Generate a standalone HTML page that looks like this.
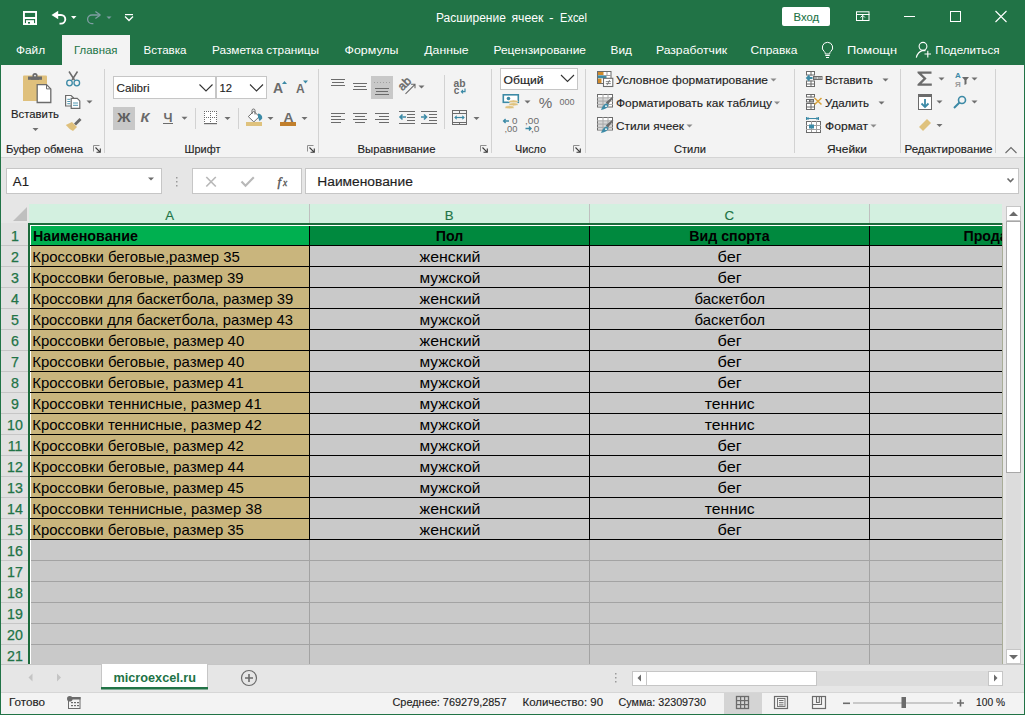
<!DOCTYPE html>
<html><head><meta charset="utf-8"><title>Excel</title>
<style>html,body{margin:0;padding:0;width:1025px;height:715px;overflow:hidden;background:#f3f3f3}svg{display:block}text{white-space:pre}</style>
</head><body><svg width="1025" height="715" viewBox="0 0 1025 715"><rect x="0" y="0" width="1025" height="65" fill="#217346" />
<rect x="62" y="35" width="68" height="30" fill="#f3f3f3" />
<rect x="1" y="65" width="1023" height="92" fill="#f3f3f3" />
<rect x="1" y="157" width="1023" height="47" fill="#e6e6e6" />
<rect x="1" y="157" width="1023" height="1" fill="#d4d4d4" />
<text x="436.0" y="22" font-size="12.3" fill="#ffffff" textLength="69.8" lengthAdjust="spacingAndGlyphs" font-family="Liberation Sans" >Расширение</text>
<text x="511.4" y="22" font-size="12.3" fill="#ffffff" textLength="32.0" lengthAdjust="spacingAndGlyphs" font-family="Liberation Sans" >ячеек</text>
<text x="549.0" y="22" font-size="12.3" fill="#ffffff" textLength="4.6" lengthAdjust="spacingAndGlyphs" font-family="Liberation Sans" >-</text>
<text x="560.1" y="22" font-size="12.3" fill="#ffffff" textLength="26.8" lengthAdjust="spacingAndGlyphs" font-family="Liberation Sans" >Excel</text>
<rect x="782" y="7" width="48" height="19" fill="#ffffff" rx="2"/>
<text x="793.5" y="21" font-size="11.5" fill="#217346" stroke="#217346" stroke-width="0.1" textLength="25.5" lengthAdjust="spacingAndGlyphs" font-family="Liberation Sans" >Вход</text>
<rect x="23" y="11" width="14" height="1.9" fill="#ffffff" />
<rect x="23" y="11" width="1.9" height="14" fill="#ffffff" />
<rect x="35.1" y="11" width="1.9" height="14" fill="#ffffff" />
<rect x="23" y="23.1" width="14" height="1.9" fill="#ffffff" />
<rect x="23" y="17" width="14" height="2" fill="#ffffff" />
<rect x="26" y="20.2" width="8" height="4" fill="#ffffff" />
<rect x="28" y="22" width="2" height="1.6" fill="#217346" />
<path d="M51.5 15 L58.2 10.8 L58.2 19.2 Z" fill="#ffffff" />
<path d="M57 15 H61 A4.3 4.3 0 0 1 61 23.6 H59.5" fill="none" stroke="#ffffff" stroke-width="1.9" />
<path d="M71 16 h5.5 l-2.75 3 z" fill="#ffffff" />
<g transform="matrix(-1 0 0 1 152.9 0)">
<path d="M52.5 15 L57.5 11.5 M52.5 15 L57.5 18.5" fill="none" stroke="#7f9ea3" stroke-width="1.3" />
<path d="M53 15 H61 A4.3 4.3 0 0 1 61 23.6 H59.5" fill="none" stroke="#7f9ea3" stroke-width="1.3" />
</g>
<path d="M106.5 16.5 h5 l-2.5 2.5 z" fill="#7f9ea3" />
<rect x="125" y="14" width="8" height="1.2" fill="#ffffff" />
<path d="M125 16.5 l4 4 l4 -4" fill="none" stroke="#ffffff" stroke-width="1.3" />
<rect x="856.5" y="11.8" width="12.5" height="8.7" fill="none" stroke="#ffffff" stroke-width="1"/>
<rect x="856" y="14" width="13.5" height="1" fill="#ffffff" />
<path d="M862.7 20.5 v-5.2 M860.5 17.5 l2.2 -2.2 l2.2 2.2" fill="none" stroke="#ffffff" stroke-width="1" />
<rect x="904" y="16" width="11" height="1" fill="#ffffff" />
<rect x="950.5" y="11.5" width="10" height="10" fill="none" stroke="#ffffff" stroke-width="1"/>
<path d="M995.5 11 L1006.5 22 M1006.5 11 L995.5 22" fill="none" stroke="#ffffff" stroke-width="1.1" />
<text x="15.899999999999999" y="53.5" font-size="11.5" fill="#ffffff" textLength="29.2" lengthAdjust="spacingAndGlyphs" font-family="Liberation Sans" >Файл</text>
<text x="74.0" y="53.5" font-size="11.5" fill="#217346" textLength="43.5" lengthAdjust="spacingAndGlyphs" font-family="Liberation Sans" >Главная</text>
<text x="143.5" y="53.5" font-size="11.5" fill="#ffffff" textLength="43" lengthAdjust="spacingAndGlyphs" font-family="Liberation Sans" >Вставка</text>
<text x="212.0" y="53.5" font-size="11.5" fill="#ffffff" textLength="107.1" lengthAdjust="spacingAndGlyphs" font-family="Liberation Sans" >Разметка страницы</text>
<text x="344.5" y="53.5" font-size="11.5" fill="#ffffff" textLength="54" lengthAdjust="spacingAndGlyphs" font-family="Liberation Sans" >Формулы</text>
<text x="424.3" y="53.5" font-size="11.5" fill="#ffffff" textLength="44.2" lengthAdjust="spacingAndGlyphs" font-family="Liberation Sans" >Данные</text>
<text x="493.5" y="53.5" font-size="11.5" fill="#ffffff" textLength="92.5" lengthAdjust="spacingAndGlyphs" font-family="Liberation Sans" >Рецензирование</text>
<text x="610.5" y="53.5" font-size="11.5" fill="#ffffff" textLength="21.4" lengthAdjust="spacingAndGlyphs" font-family="Liberation Sans" >Вид</text>
<text x="655.9" y="53.5" font-size="11.5" fill="#ffffff" textLength="71.2" lengthAdjust="spacingAndGlyphs" font-family="Liberation Sans" >Разработчик</text>
<text x="750.5" y="53.5" font-size="11.5" fill="#ffffff" textLength="47" lengthAdjust="spacingAndGlyphs" font-family="Liberation Sans" >Справка</text>
<text x="846.9" y="53.5" font-size="11.5" fill="#ffffff" textLength="50.1" lengthAdjust="spacingAndGlyphs" font-family="Liberation Sans" >Помощн</text>
<text x="935.3" y="53.5" font-size="11.5" fill="#ffffff" textLength="64.2" lengthAdjust="spacingAndGlyphs" font-family="Liberation Sans" >Поделиться</text>
<path d="M827.5 42.3 a5.2 5.2 0 0 0 -3.2 9.3 q0.9 0.8 0.9 1.8 v0.6 h4.6 v-0.6 q0 -1 0.9 -1.8 a5.2 5.2 0 0 0 -3.2 -9.3 z" fill="none" stroke="#ffffff" stroke-width="1" />
<rect x="825.3" y="55" width="4.400000000000091" height="1" fill="#ffffff" />
<rect x="826" y="57" width="3" height="1" fill="#ffffff" />
<circle cx="923" cy="46.3" r="3.9" fill="none" stroke="#ffffff" stroke-width="1.1"/>
<path d="M916.3 57.6 q1.2 -5.6 6.7 -7.2 q1.5 0 2.6 0.4" fill="none" stroke="#ffffff" stroke-width="1.1" />
<path d="M924.5 54 h6.5 M927.8 50.8 v6.7" fill="none" stroke="#ffffff" stroke-width="1.1" />
<rect x="104" y="69" width="1" height="84" fill="#d2d2d2" />
<rect x="318" y="69" width="1" height="84" fill="#d2d2d2" />
<rect x="491" y="69" width="1" height="84" fill="#d2d2d2" />
<rect x="585" y="69" width="1" height="84" fill="#d2d2d2" />
<rect x="794" y="69" width="1" height="84" fill="#d2d2d2" />
<rect x="900" y="69" width="1" height="84" fill="#d2d2d2" />
<rect x="995" y="69" width="1" height="84" fill="#d2d2d2" />
<text x="6" y="153" font-size="11.5" fill="#1e1e1e" stroke="#1e1e1e" stroke-width="0.15" textLength="77" lengthAdjust="spacingAndGlyphs" font-family="Liberation Sans" >Буфер обмена</text>
<text x="184.5" y="153" font-size="11.5" fill="#1e1e1e" stroke="#1e1e1e" stroke-width="0.15" textLength="36" lengthAdjust="spacingAndGlyphs" font-family="Liberation Sans" >Шрифт</text>
<text x="357.5" y="153" font-size="11.5" fill="#1e1e1e" stroke="#1e1e1e" stroke-width="0.15" textLength="78" lengthAdjust="spacingAndGlyphs" font-family="Liberation Sans" >Выравнивание</text>
<text x="515" y="153" font-size="11.5" fill="#1e1e1e" stroke="#1e1e1e" stroke-width="0.15" textLength="31" lengthAdjust="spacingAndGlyphs" font-family="Liberation Sans" >Число</text>
<text x="674" y="153" font-size="11.5" fill="#1e1e1e" stroke="#1e1e1e" stroke-width="0.15" textLength="32" lengthAdjust="spacingAndGlyphs" font-family="Liberation Sans" >Стили</text>
<text x="827" y="153" font-size="11.5" fill="#1e1e1e" stroke="#1e1e1e" stroke-width="0.15" textLength="40" lengthAdjust="spacingAndGlyphs" font-family="Liberation Sans" >Ячейки</text>
<text x="904.5" y="153" font-size="11.5" fill="#1e1e1e" stroke="#1e1e1e" stroke-width="0.15" textLength="88" lengthAdjust="spacingAndGlyphs" font-family="Liberation Sans" >Редактирование</text>
<path d="M93.5 151.5 v-6 h6" fill="none" stroke="#8f8f8f" stroke-width="1" />
<path d="M95.5 147.5 l4.8 4.8 M100.3 148.5 v3.8 h-3.8" fill="none" stroke="#3a3a3a" stroke-width="1.1" />
<path d="M307.5 151.5 v-6 h6" fill="none" stroke="#8f8f8f" stroke-width="1" />
<path d="M309.5 147.5 l4.8 4.8 M314.3 148.5 v3.8 h-3.8" fill="none" stroke="#3a3a3a" stroke-width="1.1" />
<path d="M480.5 151.5 v-6 h6" fill="none" stroke="#8f8f8f" stroke-width="1" />
<path d="M482.5 147.5 l4.8 4.8 M487.3 148.5 v3.8 h-3.8" fill="none" stroke="#3a3a3a" stroke-width="1.1" />
<path d="M573.5 151.5 v-6 h6" fill="none" stroke="#8f8f8f" stroke-width="1" />
<path d="M575.5 147.5 l4.8 4.8 M580.3 148.5 v3.8 h-3.8" fill="none" stroke="#3a3a3a" stroke-width="1.1" />
<path d="M1005.5 153 l5.5 -5.5 l5.5 5.5" fill="none" stroke="#6a6a6a" stroke-width="1.1" />
<path d="M24 75.5 h22 a1 1 0 0 1 1 1 v24.5 h-24 v-24.5 a1 1 0 0 1 1 -1 z" fill="#dfc07c" />
<rect x="28" y="76.5" width="14" height="3.3" fill="#6b6b6b" />
<circle cx="35" cy="75.6" r="2.6" fill="#6b6b6b"/>
<circle cx="35" cy="75.6" r="0.9" fill="#f3f3f3"/>
<rect x="31" y="78.5" width="8" height="1.3" fill="#6b6b6b" />
<path d="M37.2 84.6 h9.3 l4.3 4.3 v13.6 h-13.6 z" fill="#ffffff" stroke="#6b6b6b" stroke-width="1.3" />
<path d="M46.5 84.6 v4.3 h4.3" fill="none" stroke="#6b6b6b" stroke-width="1" />
<text x="11" y="118" font-size="11.5" fill="#1e1e1e" stroke="#1e1e1e" stroke-width="0.15" textLength="48" lengthAdjust="spacingAndGlyphs" font-family="Liberation Sans" >Вставить</text>
<path d="M32.5 128.0 h6 l-3 3 z" fill="#6f6f6f" />
<path d="M69 71.5 L74.5 80 M77.5 71.5 L72 80" fill="none" stroke="#6b6b6b" stroke-width="1.5" />
<circle cx="69.5" cy="83" r="2.8" fill="none" stroke="#3c8aa6" stroke-width="1.3"/>
<circle cx="76.8" cy="83" r="2.8" fill="none" stroke="#3c8aa6" stroke-width="1.3"/>
<path d="M65.6 95.5 h5.5 l2.3 2.3 v8.2 h-7.8 z" fill="#ffffff" stroke="#6b6b6b" stroke-width="1.2" />
<path d="M71.2 98.3 h6 l2.6 2.6 v7.4 h-8.6 z" fill="#ffffff" stroke="#6b6b6b" stroke-width="1.2" />
<path d="M67.3 99.3 h3 M67.3 101.5 h3 M67.3 103.7 h3 M73 103 h5 M73 105.3 h5" fill="none" stroke="#3c8aa6" stroke-width="0.9" />
<path d="M86.5 100.5 h6 l-3 3 z" fill="#6f6f6f" />
<path d="M74 123.5 L79.5 118 L81.5 120 L76 125.5 Z" fill="#6b6b6b" />
<path d="M72 122 L77 127 L73 131 Q69 129 65.8 125 Z" fill="#dfc07c" />
<rect x="113.5" y="76.5" width="102" height="22" fill="#ffffff" stroke="#c6c6c6" stroke-width="1"/>
<rect x="216.5" y="76.5" width="50" height="22" fill="#ffffff" stroke="#c6c6c6" stroke-width="1"/>
<text x="116.5" y="92" font-size="11.5" fill="#1e1e1e" stroke="#1e1e1e" stroke-width="0.15" textLength="33" lengthAdjust="spacingAndGlyphs" font-family="Liberation Sans" >Calibri</text>
<text x="219.5" y="92" font-size="11.5" fill="#1e1e1e" stroke="#1e1e1e" stroke-width="0.15" textLength="12.5" lengthAdjust="spacingAndGlyphs" font-family="Liberation Sans" >12</text>
<path d="M199.5 84.5 l6.5 6.5 l6.5 -6.5" fill="none" stroke="#333333" stroke-width="1.1" />
<path d="M250 84.5 l6.5 6.5 l6.5 -6.5" fill="none" stroke="#333333" stroke-width="1.1" />
<text x="273" y="93" font-size="14" fill="#6b6b6b" font-weight="700" font-family="Liberation Sans" >A</text>
<path d="M282 84 l2.5 -3 l2.5 3 z" fill="#3c8aa6" />
<text x="296" y="93" font-size="12" fill="#6b6b6b" font-weight="700" font-family="Liberation Sans" >A</text>
<path d="M303 80.5 h5 l-2.5 3 z" fill="#3c8aa6" />
<rect x="113" y="107" width="22" height="23" fill="#c8c8c8" />
<text x="117.3" y="122" font-size="13" fill="#5e5e5e" font-weight="700" textLength="13.3" lengthAdjust="spacingAndGlyphs" font-family="Liberation Sans" >Ж</text>
<text x="140.5" y="122" font-size="13" fill="#6b6b6b" font-weight="700" textLength="9" lengthAdjust="spacingAndGlyphs" font-family="Liberation Sans" font-style="italic">К</text>
<text x="163.5" y="122" font-size="13" fill="#6b6b6b" font-weight="700" textLength="9" lengthAdjust="spacingAndGlyphs" font-family="Liberation Sans" >Ч</text>
<rect x="163" y="123" width="10" height="1" fill="#6b6b6b" />
<path d="M181.5 116.8 h6 l-3 3 z" fill="#6f6f6f" />
<rect x="195" y="108" width="1" height="21" fill="#d2d2d2" />
<rect x="204" y="111" width="13" height="13" fill="#ffffff" />
<rect x="204" y="111" width="1" height="1" fill="#6b6b6b" />
<rect x="206" y="111" width="1" height="1" fill="#6b6b6b" />
<rect x="208" y="111" width="1" height="1" fill="#6b6b6b" />
<rect x="210" y="111" width="1" height="1" fill="#6b6b6b" />
<rect x="212" y="111" width="1" height="1" fill="#6b6b6b" />
<rect x="214" y="111" width="1" height="1" fill="#6b6b6b" />
<rect x="216" y="111" width="1" height="1" fill="#6b6b6b" />
<rect x="204" y="117" width="1" height="1" fill="#6b6b6b" />
<rect x="206" y="117" width="1" height="1" fill="#6b6b6b" />
<rect x="208" y="117" width="1" height="1" fill="#6b6b6b" />
<rect x="210" y="117" width="1" height="1" fill="#6b6b6b" />
<rect x="212" y="117" width="1" height="1" fill="#6b6b6b" />
<rect x="214" y="117" width="1" height="1" fill="#6b6b6b" />
<rect x="216" y="117" width="1" height="1" fill="#6b6b6b" />
<rect x="204" y="113" width="1" height="1" fill="#6b6b6b" />
<rect x="204" y="115" width="1" height="1" fill="#6b6b6b" />
<rect x="204" y="119" width="1" height="1" fill="#6b6b6b" />
<rect x="204" y="121" width="1" height="1" fill="#6b6b6b" />
<rect x="210" y="113" width="1" height="1" fill="#6b6b6b" />
<rect x="210" y="115" width="1" height="1" fill="#6b6b6b" />
<rect x="210" y="119" width="1" height="1" fill="#6b6b6b" />
<rect x="210" y="121" width="1" height="1" fill="#6b6b6b" />
<rect x="216" y="113" width="1" height="1" fill="#6b6b6b" />
<rect x="216" y="115" width="1" height="1" fill="#6b6b6b" />
<rect x="216" y="119" width="1" height="1" fill="#6b6b6b" />
<rect x="216" y="121" width="1" height="1" fill="#6b6b6b" />
<rect x="204" y="123" width="13" height="1.2" fill="#6b6b6b" />
<path d="M224.5 117.0 h6 l-3 3 z" fill="#6f6f6f" />
<rect x="238" y="108" width="1" height="21" fill="#d2d2d2" />
<path d="M248.3 116.6 l5.5 -5.3 l5.5 5.3 l-5.5 5.3 z" fill="#ffffff" stroke="#6b6b6b" stroke-width="1" />
<path d="M252 114 v-3.5 a1.5 1.5 0 0 1 3 0 v4" fill="none" stroke="#6b6b6b" stroke-width="1" />
<path d="M258 113.6 q4.6 0.8 4.2 5 l-2.6 2.6 l-1.6 -4 z" fill="#3c8aa6" />
<rect x="246" y="122" width="16" height="4" fill="#dfc27d" />
<path d="M267.5 117.0 h6 l-3 3 z" fill="#6f6f6f" />
<text x="283.5" y="121.5" font-size="13.5" fill="#6b6b6b" font-weight="700" textLength="10" lengthAdjust="spacingAndGlyphs" font-family="Liberation Sans" >A</text>
<rect x="280" y="122" width="16" height="4" fill="#c17f2c" />
<path d="M301.5 117.0 h6 l-3 3 z" fill="#6f6f6f" />
<rect x="331" y="79" width="14" height="1" fill="#6b6b6b" />
<rect x="332" y="82" width="12" height="1" fill="#6b6b6b" />
<rect x="331" y="85" width="14" height="1" fill="#6b6b6b" />
<rect x="353" y="83" width="14" height="1" fill="#6b6b6b" />
<rect x="354" y="86" width="12" height="1" fill="#6b6b6b" />
<rect x="353" y="89" width="14" height="1" fill="#6b6b6b" />
<rect x="371" y="76" width="22" height="23" fill="#c8c8c8" />
<rect x="375" y="88" width="14" height="1" fill="#6b6b6b" />
<rect x="376" y="91" width="12" height="1" fill="#6b6b6b" />
<rect x="375" y="94" width="14" height="1" fill="#6b6b6b" />
<path d="M374 82.5 h16" fill="none" stroke="#a0a0a0" stroke-width="1" stroke-dasharray="1 2"/>
<text x="398.5" y="88.3" font-size="12" fill="#6b6b6b" stroke="#6b6b6b" stroke-width="0.5" font-family="Liberation Sans" transform="rotate(-45 404 85)">ab</text>
<path d="M405.5 93.8 L415 84.3 M411 84.3 h4 v4" fill="none" stroke="#6b6b6b" stroke-width="1.1" />
<path d="M418.5 85.5 h6 l-3 3 z" fill="#6f6f6f" />
<rect x="331" y="113" width="14" height="1" fill="#6b6b6b" />
<rect x="331" y="116" width="10" height="1" fill="#6b6b6b" />
<rect x="331" y="119" width="14" height="1" fill="#6b6b6b" />
<rect x="331" y="122" width="10" height="1" fill="#6b6b6b" />
<rect x="353" y="113" width="14" height="1" fill="#6b6b6b" />
<rect x="355" y="116" width="10" height="1" fill="#6b6b6b" />
<rect x="353" y="119" width="14" height="1" fill="#6b6b6b" />
<rect x="355" y="122" width="10" height="1" fill="#6b6b6b" />
<rect x="375" y="113" width="14" height="1" fill="#6b6b6b" />
<rect x="379" y="116" width="10" height="1" fill="#6b6b6b" />
<rect x="375" y="119" width="14" height="1" fill="#6b6b6b" />
<rect x="379" y="122" width="10" height="1" fill="#6b6b6b" />
<rect x="399" y="111" width="16" height="1" fill="#6b6b6b" />
<rect x="407" y="114" width="8" height="1" fill="#6b6b6b" />
<rect x="407" y="117" width="8" height="1" fill="#6b6b6b" />
<rect x="407" y="120" width="8" height="1" fill="#6b6b6b" />
<rect x="399" y="123" width="16" height="1" fill="#6b6b6b" />
<path d="M400 117 h6 M402.5 114.5 l-2.5 2.5 l2.5 2.5" fill="none" stroke="#3c8aa6" stroke-width="1.6" />
<rect x="421" y="111" width="16" height="1" fill="#6b6b6b" />
<rect x="429" y="114" width="8" height="1" fill="#6b6b6b" />
<rect x="429" y="117" width="8" height="1" fill="#6b6b6b" />
<rect x="429" y="120" width="8" height="1" fill="#6b6b6b" />
<rect x="421" y="123" width="16" height="1" fill="#6b6b6b" />
<path d="M421 117 h6 M424 114.5 l2.5 2.5 l-2.5 2.5" fill="none" stroke="#3c8aa6" stroke-width="1.6" />
<rect x="444" y="75" width="1" height="54" fill="#d2d2d2" />
<text x="453.6" y="86.5" font-size="10" fill="#6b6b6b" font-weight="700" textLength="12" lengthAdjust="spacingAndGlyphs" font-family="Liberation Sans" >ab</text>
<text x="453.8" y="94" font-size="10" fill="#6b6b6b" font-weight="700" font-family="Liberation Sans" >c</text>
<path d="M465 88.5 v3.2 h-3.5 M463 90 l-1.6 1.7 l1.6 1.7" fill="none" stroke="#3c8aa6" stroke-width="1.2" />
<rect x="452.5" y="110.5" width="14" height="14" fill="none" stroke="#6b6b6b" stroke-width="1"/>
<rect x="452" y="113" width="15" height="1" fill="#6b6b6b" />
<rect x="452" y="122" width="15" height="1" fill="#6b6b6b" />
<rect x="459" y="110" width="1" height="3" fill="#6b6b6b" />
<rect x="459" y="122" width="1" height="3" fill="#6b6b6b" />
<path d="M455 117.5 h9" fill="none" stroke="#3c8aa6" stroke-width="1.2" />
<path d="M454.2 117.5 l2.5 -2.2 v4.4 z M464.8 117.5 l-2.5 -2.2 v4.4 z" fill="#3c8aa6" />
<path d="M473.5 117.0 h6 l-3 3 z" fill="#6f6f6f" />
<rect x="500.5" y="68.5" width="77" height="21" fill="#ffffff" stroke="#c6c6c6" stroke-width="1"/>
<text x="503.5" y="83.5" font-size="11.5" fill="#1e1e1e" stroke="#1e1e1e" stroke-width="0.15" textLength="40" lengthAdjust="spacingAndGlyphs" font-family="Liberation Sans" >Общий</text>
<path d="M561 75 l6.5 6.5 l6.5 -6.5" fill="none" stroke="#333333" stroke-width="1.1" />
<rect x="503.3" y="94.8" width="15" height="7.5" fill="#ffffff" stroke="#3c8aa6" stroke-width="1.6"/>
<circle cx="508.5" cy="98.5" r="1.8" fill="#3c8aa6"/>
<ellipse cx="513.5" cy="101.5" rx="4.6" ry="1.6" fill="#dfc27d" stroke="#f3f3f3" stroke-width="0.6"/>
<ellipse cx="513.5" cy="104.3" rx="4.6" ry="1.6" fill="#dfc27d" stroke="#f3f3f3" stroke-width="0.6"/>
<ellipse cx="509.5" cy="107.2" rx="4.6" ry="1.6" fill="#dfc27d" stroke="#f3f3f3" stroke-width="0.6"/>
<path d="M524.5 100.5 h6 l-3 3 z" fill="#6f6f6f" />
<text x="538.8" y="108" font-size="14.5" fill="#6b6b6b" textLength="13.5" lengthAdjust="spacingAndGlyphs" font-family="Liberation Sans" >%</text>
<text x="559.5" y="105" font-size="9.5" fill="#6b6b6b" textLength="15" lengthAdjust="spacingAndGlyphs" font-family="Liberation Sans" >000</text>
<path d="M503.5 121 h5.5 M505.6 119 l-2 2 l2 2" fill="none" stroke="#3c8aa6" stroke-width="1.4" />
<text x="512" y="123.5" font-size="9.5" fill="#6b6b6b" textLength="5.5" lengthAdjust="spacingAndGlyphs" font-family="Liberation Sans" >0</text>
<text x="504.5" y="131.5" font-size="9.5" fill="#6b6b6b" textLength="13" lengthAdjust="spacingAndGlyphs" font-family="Liberation Sans" >,00</text>
<text x="525" y="123.5" font-size="9.5" fill="#6b6b6b" textLength="14" lengthAdjust="spacingAndGlyphs" font-family="Liberation Sans" >,00</text>
<path d="M525.5 128.5 h5.5 M529 126.5 l2 2 l-2 2" fill="none" stroke="#3c8aa6" stroke-width="1.4" />
<text x="531" y="131.5" font-size="9.5" fill="#6b6b6b" textLength="8.5" lengthAdjust="spacingAndGlyphs" font-family="Liberation Sans" >,0</text>
<rect x="597.5" y="71.5" width="13.5" height="12" fill="#ffffff" stroke="#6b6b6b" stroke-width="1"/>
<rect x="598" y="72" width="5.5" height="3" fill="#d0892a" />
<rect x="598" y="75.3" width="8.5" height="3" fill="#3c8aa6" />
<rect x="598" y="78.6" width="3.5" height="4.4" fill="#d0892a" />
<rect x="606.5" y="72" width="1" height="3.299999999999997" fill="#a0a0a0" />
<rect x="603.5" y="75" width="7.5" height="1" fill="#a0a0a0" />
<rect x="603.5" y="78.3" width="9.3" height="8.2" fill="#ffffff" stroke="#6b6b6b" stroke-width="1.1"/>
<path d="M605.8 81.6 h5 M605.8 83.6 h5 M609.6 80 l-2.6 5.2" fill="none" stroke="#6b6b6b" stroke-width="0.8" />
<text x="616" y="84" font-size="11.5" fill="#1e1e1e" stroke="#1e1e1e" stroke-width="0.15" textLength="152" lengthAdjust="spacingAndGlyphs" font-family="Liberation Sans" >Условное форматирование</text>
<path d="M770.5 78.5 h6 l-3 3 z" fill="#8a8a8a" />
<rect x="597.5" y="94.5" width="15" height="12.5" fill="#ffffff" stroke="#6b6b6b" stroke-width="1"/>
<rect x="598" y="98" width="9.5" height="8.5" fill="#d6d6d6" />
<rect x="602.5" y="94" width="1" height="13" fill="#a8a8a8" />
<rect x="607.5" y="94" width="1" height="13" fill="#a8a8a8" />
<rect x="597" y="97.3" width="16" height="1" fill="#a8a8a8" />
<rect x="597" y="100.6" width="16" height="1" fill="#a8a8a8" />
<rect x="597" y="103.9" width="16" height="1" fill="#a8a8a8" />
<path d="M612.8 97.2 L608 103.6 L606.8 102.6 Z" fill="#6b6b6b" stroke="#6b6b6b" stroke-width="1.4" />
<path d="M601 110 Q602.5 105 606.5 103.2 L608.6 105 Q607.5 109 601 110 Z" fill="#3c8aa6" />
<circle cx="606" cy="106.2" r="0.9" fill="#ffffff"/>
<rect x="597.5" y="117.5" width="15" height="12.5" fill="#ffffff" stroke="#6b6b6b" stroke-width="1"/>
<rect x="598" y="121" width="14" height="8.5" fill="#d6d6d6" />
<rect x="602.5" y="117" width="1" height="13" fill="#a8a8a8" />
<rect x="607.5" y="117" width="1" height="13" fill="#a8a8a8" />
<rect x="597" y="120.3" width="16" height="1" fill="#a8a8a8" />
<rect x="597" y="123.6" width="16" height="1" fill="#a8a8a8" />
<rect x="597" y="126.9" width="16" height="1" fill="#a8a8a8" />
<path d="M612.8 120.2 L608 126.6 L606.8 125.6 Z" fill="#6b6b6b" stroke="#6b6b6b" stroke-width="1.4" />
<path d="M601 133 Q602.5 128 606.5 126.2 L608.6 128 Q607.5 132 601 133 Z" fill="#3c8aa6" />
<circle cx="606" cy="129.2" r="0.9" fill="#ffffff"/>
<text x="616" y="107" font-size="11.5" fill="#1e1e1e" stroke="#1e1e1e" stroke-width="0.15" textLength="156" lengthAdjust="spacingAndGlyphs" font-family="Liberation Sans" >Форматировать как таблицу</text>
<path d="M774 101.5 h6 l-3 3 z" fill="#8a8a8a" />
<text x="616" y="130" font-size="11.5" fill="#1e1e1e" stroke="#1e1e1e" stroke-width="0.15" textLength="68" lengthAdjust="spacingAndGlyphs" font-family="Liberation Sans" >Стили ячеек</text>
<path d="M686.5 124.5 h6 l-3 3 z" fill="#8a8a8a" />
<rect x="806.5" y="71.5" width="8" height="3.5" fill="#ffffff" stroke="#6b6b6b" stroke-width="1"/>
<rect x="810.5" y="71" width="1" height="4.5" fill="#6b6b6b" />
<rect x="806.5" y="81.0" width="8" height="5.5" fill="#ffffff" stroke="#6b6b6b" stroke-width="1"/>
<rect x="810.5" y="80.5" width="1" height="6.5" fill="#6b6b6b" />
<rect x="806" y="83.5" width="9" height="1" fill="#6b6b6b" />
<rect x="813.5" y="76.5" width="8.5" height="3" fill="#ffffff" stroke="#6b6b6b" stroke-width="1"/>
<rect x="817.7" y="76" width="1" height="4" fill="#6b6b6b" />
<rect x="814" y="77" width="3" height="2" fill="#a8a8a8" />
<rect x="818.5" y="77" width="3" height="2" fill="#a8a8a8" />
<path d="M812.5 78 H807 M809.5 75.5 L807 78 L809.5 80.5" fill="none" stroke="#3c8aa6" stroke-width="1.8" />
<text x="825" y="84" font-size="11.5" fill="#1e1e1e" stroke="#1e1e1e" stroke-width="0.15" textLength="48" lengthAdjust="spacingAndGlyphs" font-family="Liberation Sans" >Вставить</text>
<path d="M882.5 78.5 h6 l-3 3 z" fill="#6f6f6f" />
<rect x="806.5" y="94.5" width="8" height="2.5" fill="#ffffff" stroke="#6b6b6b" stroke-width="1"/>
<rect x="810.5" y="94" width="1" height="3.5" fill="#6b6b6b" />
<rect x="806.5" y="99.5" width="3" height="2.5" fill="#ffffff" stroke="#6b6b6b" stroke-width="1"/>
<rect x="810.0" y="99.5" width="3.5" height="2.5" fill="#b0b0b0" stroke="#6b6b6b" stroke-width="1"/>
<rect x="806.5" y="103.5" width="8" height="6" fill="#ffffff" stroke="#6b6b6b" stroke-width="1"/>
<rect x="810.5" y="103" width="1" height="7" fill="#6b6b6b" />
<rect x="806" y="106.5" width="9" height="1" fill="#6b6b6b" />
<path d="M814.5 98 L821.5 104.5 M821.5 98 L814.5 104.5" fill="none" stroke="#d8a23a" stroke-width="1.5" />
<text x="825" y="107" font-size="11.5" fill="#1e1e1e" stroke="#1e1e1e" stroke-width="0.15" textLength="44" lengthAdjust="spacingAndGlyphs" font-family="Liberation Sans" >Удалить</text>
<path d="M878.5 101.5 h6 l-3 3 z" fill="#6f6f6f" />
<rect x="806.5" y="121.5" width="14" height="11" fill="#ffffff" stroke="#6b6b6b" stroke-width="1"/>
<rect x="811" y="121" width="1" height="12" fill="#a0a0a0" />
<rect x="816" y="121" width="1" height="12" fill="#a0a0a0" />
<rect x="806" y="125" width="15" height="1" fill="#a0a0a0" />
<rect x="806" y="129" width="15" height="1" fill="#a0a0a0" />
<rect x="809" y="124.5" width="5" height="4" fill="#3c8aa6" />
<rect x="806" y="132" width="15" height="1" fill="#6b6b6b" />
<path d="M806.5 117 v3 M818.5 117 v3 M807 118.5 h11 M808.5 117 l-1.5 1.5 l1.5 1.5 M816.5 117 l1.5 1.5 l-1.5 1.5" fill="none" stroke="#3c8aa6" stroke-width="1" />
<text x="825" y="130" font-size="11.5" fill="#1e1e1e" stroke="#1e1e1e" stroke-width="0.15" textLength="43" lengthAdjust="spacingAndGlyphs" font-family="Liberation Sans" >Формат</text>
<path d="M870.5 124.5 h6 l-3 3 z" fill="#8a8a8a" />
<path d="M917.5 71.5 H931.5 V73.8 H921.6 L926.6 78.6 L921.6 83.4 H931.8 V85.8 H917.5 V84.3 L923.4 78.6 L917.5 72.9 Z" fill="#6b6b6b" />
<path d="M938.5 77.5 h6 l-3 3 z" fill="#6f6f6f" />
<text x="955" y="78" font-size="8" fill="#3c8aa6" font-weight="700" font-family="Liberation Sans" >А</text>
<text x="955" y="87" font-size="8" fill="#9a9a9a" font-weight="700" font-family="Liberation Sans" >Я</text>
<path d="M962 77 h7 l-2.5 3 v4 l-2 1 v-5 z" fill="#6b6b6b" />
<path d="M971.5 77.5 h6 l-3 3 z" fill="#6f6f6f" />
<rect x="918.5" y="94.5" width="13" height="15" fill="#ffffff" stroke="#6b6b6b" stroke-width="1"/>
<rect x="918" y="94" width="14" height="3" fill="#6b6b6b" />
<path d="M925 99 v8 M921.5 103.5 l3.5 3.5 l3.5 -3.5" fill="none" stroke="#3c8aa6" stroke-width="1.8" />
<path d="M936.5 100.5 h6 l-3 3 z" fill="#6f6f6f" />
<circle cx="962" cy="100" r="3.5" fill="none" stroke="#3c8aa6" stroke-width="1.6"/>
<path d="M959.5 102.5 l-5.5 5.5" fill="none" stroke="#3c8aa6" stroke-width="2" />
<path d="M971.5 100.5 h6 l-3 3 z" fill="#6f6f6f" />
<path d="M919 127 l8 -8 l4 4 l-8 8 z" fill="#dfc27d" />
<path d="M919 127 l4 4" fill="none" stroke="#e8dcc0" stroke-width="1" />
<path d="M936.5 124.0 h6 l-3 3 z" fill="#6f6f6f" />
<rect x="6.5" y="168.5" width="155" height="25" fill="#ffffff" stroke="#c6c6c6" stroke-width="1"/>
<text x="12.8" y="186" font-size="12.3" fill="#1e1e1e" stroke="#1e1e1e" stroke-width="0.15" textLength="16.2" lengthAdjust="spacingAndGlyphs" font-family="Liberation Sans" >A1</text>
<path d="M148 177.5 h6 l-3 3 z" fill="#6b6b6b" />
<rect x="176" y="177" width="1.5" height="1.5" fill="#9a9a9a" />
<rect x="176" y="181" width="1.5" height="1.5" fill="#9a9a9a" />
<rect x="176" y="185" width="1.5" height="1.5" fill="#9a9a9a" />
<rect x="192.5" y="168.5" width="109" height="25" fill="#ffffff" stroke="#c6c6c6" stroke-width="1"/>
<path d="M206.3 177 l9.5 9.5 M215.8 177 l-9.5 9.5" fill="none" stroke="#b8b8b8" stroke-width="1.7" />
<path d="M241.5 181.5 l4 4.2 l8.3 -8.5" fill="none" stroke="#b8b8b8" stroke-width="2.1" />
<text x="277.5" y="185.5" font-size="13" fill="#555555" stroke="#555555" stroke-width="0.4" font-family="Liberation Serif" font-style="italic">f</text>
<text x="283" y="185.5" font-size="9.5" fill="#555555" stroke="#555555" stroke-width="0.3" font-family="Liberation Serif" font-style="italic">x</text>
<rect x="305.5" y="168.5" width="713" height="25" fill="#ffffff" stroke="#c6c6c6" stroke-width="1"/>
<text x="317.3" y="186" font-size="12.3" fill="#1e1e1e" stroke="#1e1e1e" stroke-width="0.15" textLength="95.5" lengthAdjust="spacingAndGlyphs" font-family="Liberation Sans" >Наименование</text>
<path d="M1007.5 178.5 l3 3 l3 -3" fill="none" stroke="#6b6b6b" stroke-width="1.6" />
<rect x="1" y="204" width="1005" height="460" fill="#e6e6e6" />
<path d="M13 221 L27 207 L27 221 Z" fill="#bfbfbf" />
<rect x="29" y="204" width="973" height="19" fill="#d3f0e0" />
<rect x="309" y="204" width="1" height="19" fill="#c0c0c0" />
<rect x="589" y="204" width="1" height="19" fill="#c0c0c0" />
<rect x="869" y="204" width="1" height="19" fill="#c0c0c0" />
<text x="169.7" y="220" font-size="13.2" fill="#217346" stroke="#217346" stroke-width="0.15" text-anchor="middle" font-family="Liberation Sans" >A</text>
<text x="449.2" y="220" font-size="13.2" fill="#217346" stroke="#217346" stroke-width="0.15" text-anchor="middle" font-family="Liberation Sans" >B</text>
<text x="729.2" y="220" font-size="13.2" fill="#217346" stroke="#217346" stroke-width="0.15" text-anchor="middle" font-family="Liberation Sans" >C</text>
<rect x="1" y="223" width="27" height="441" fill="#e1e1e1" />
<rect x="28" y="223" width="974" height="2" fill="#1c6b3c" />
<rect x="28" y="223" width="2" height="441" fill="#1c6b3c" />
<rect x="30" y="225" width="972" height="1" fill="#ffffff" />
<rect x="30" y="225" width="1" height="439" fill="#ffffff" />
<rect x="31" y="226" width="278" height="19" fill="#00b050" />
<rect x="310" y="226" width="692" height="19" fill="#00893e" />
<rect x="31" y="246" width="278" height="20" fill="#c9b57d" />
<rect x="310" y="246" width="692" height="20" fill="#c9c9c9" />
<rect x="31" y="267" width="278" height="20" fill="#c9b57d" />
<rect x="310" y="267" width="692" height="20" fill="#c9c9c9" />
<rect x="31" y="288" width="278" height="20" fill="#c9b57d" />
<rect x="310" y="288" width="692" height="20" fill="#c9c9c9" />
<rect x="31" y="309" width="278" height="20" fill="#c9b57d" />
<rect x="310" y="309" width="692" height="20" fill="#c9c9c9" />
<rect x="31" y="330" width="278" height="20" fill="#c9b57d" />
<rect x="310" y="330" width="692" height="20" fill="#c9c9c9" />
<rect x="31" y="351" width="278" height="20" fill="#c9b57d" />
<rect x="310" y="351" width="692" height="20" fill="#c9c9c9" />
<rect x="31" y="372" width="278" height="20" fill="#c9b57d" />
<rect x="310" y="372" width="692" height="20" fill="#c9c9c9" />
<rect x="31" y="393" width="278" height="20" fill="#c9b57d" />
<rect x="310" y="393" width="692" height="20" fill="#c9c9c9" />
<rect x="31" y="414" width="278" height="20" fill="#c9b57d" />
<rect x="310" y="414" width="692" height="20" fill="#c9c9c9" />
<rect x="31" y="435" width="278" height="20" fill="#c9b57d" />
<rect x="310" y="435" width="692" height="20" fill="#c9c9c9" />
<rect x="31" y="456" width="278" height="20" fill="#c9b57d" />
<rect x="310" y="456" width="692" height="20" fill="#c9c9c9" />
<rect x="31" y="477" width="278" height="20" fill="#c9b57d" />
<rect x="310" y="477" width="692" height="20" fill="#c9c9c9" />
<rect x="31" y="498" width="278" height="20" fill="#c9b57d" />
<rect x="310" y="498" width="692" height="20" fill="#c9c9c9" />
<rect x="31" y="519" width="278" height="20" fill="#c9b57d" />
<rect x="310" y="519" width="692" height="20" fill="#c9c9c9" />
<rect x="31" y="540" width="971" height="124" fill="#c9c9c9" />
<rect x="31" y="560" width="971" height="1" fill="#a3a3a3" />
<rect x="31" y="581" width="971" height="1" fill="#a3a3a3" />
<rect x="31" y="602" width="971" height="1" fill="#a3a3a3" />
<rect x="31" y="623" width="971" height="1" fill="#a3a3a3" />
<rect x="31" y="644" width="971" height="1" fill="#a3a3a3" />
<rect x="309" y="540" width="1" height="124" fill="#a3a3a3" />
<rect x="589" y="540" width="1" height="124" fill="#a3a3a3" />
<rect x="869" y="540" width="1" height="124" fill="#a3a3a3" />
<rect x="30" y="245" width="972" height="1" fill="#000000" />
<rect x="30" y="266" width="972" height="1" fill="#000000" />
<rect x="30" y="287" width="972" height="1" fill="#000000" />
<rect x="30" y="308" width="972" height="1" fill="#000000" />
<rect x="30" y="329" width="972" height="1" fill="#000000" />
<rect x="30" y="350" width="972" height="1" fill="#000000" />
<rect x="30" y="371" width="972" height="1" fill="#000000" />
<rect x="30" y="392" width="972" height="1" fill="#000000" />
<rect x="30" y="413" width="972" height="1" fill="#000000" />
<rect x="30" y="434" width="972" height="1" fill="#000000" />
<rect x="30" y="455" width="972" height="1" fill="#000000" />
<rect x="30" y="476" width="972" height="1" fill="#000000" />
<rect x="30" y="497" width="972" height="1" fill="#000000" />
<rect x="30" y="518" width="972" height="1" fill="#000000" />
<rect x="30" y="539" width="972" height="1" fill="#000000" />
<rect x="309" y="226" width="1" height="314" fill="#000000" />
<rect x="589" y="226" width="1" height="314" fill="#000000" />
<rect x="869" y="226" width="1" height="314" fill="#000000" />
<rect x="1" y="245" width="27" height="1" fill="#c6c6c6" />
<text x="15" y="241" font-size="14.2" fill="#217346" stroke="#217346" stroke-width="0.25" text-anchor="middle" font-family="Liberation Sans" >1</text>
<rect x="1" y="266" width="27" height="1" fill="#c6c6c6" />
<text x="15" y="262" font-size="14.2" fill="#217346" stroke="#217346" stroke-width="0.25" text-anchor="middle" font-family="Liberation Sans" >2</text>
<rect x="1" y="287" width="27" height="1" fill="#c6c6c6" />
<text x="15" y="283" font-size="14.2" fill="#217346" stroke="#217346" stroke-width="0.25" text-anchor="middle" font-family="Liberation Sans" >3</text>
<rect x="1" y="308" width="27" height="1" fill="#c6c6c6" />
<text x="15" y="304" font-size="14.2" fill="#217346" stroke="#217346" stroke-width="0.25" text-anchor="middle" font-family="Liberation Sans" >4</text>
<rect x="1" y="329" width="27" height="1" fill="#c6c6c6" />
<text x="15" y="325" font-size="14.2" fill="#217346" stroke="#217346" stroke-width="0.25" text-anchor="middle" font-family="Liberation Sans" >5</text>
<rect x="1" y="350" width="27" height="1" fill="#c6c6c6" />
<text x="15" y="346" font-size="14.2" fill="#217346" stroke="#217346" stroke-width="0.25" text-anchor="middle" font-family="Liberation Sans" >6</text>
<rect x="1" y="371" width="27" height="1" fill="#c6c6c6" />
<text x="15" y="367" font-size="14.2" fill="#217346" stroke="#217346" stroke-width="0.25" text-anchor="middle" font-family="Liberation Sans" >7</text>
<rect x="1" y="392" width="27" height="1" fill="#c6c6c6" />
<text x="15" y="388" font-size="14.2" fill="#217346" stroke="#217346" stroke-width="0.25" text-anchor="middle" font-family="Liberation Sans" >8</text>
<rect x="1" y="413" width="27" height="1" fill="#c6c6c6" />
<text x="15" y="409" font-size="14.2" fill="#217346" stroke="#217346" stroke-width="0.25" text-anchor="middle" font-family="Liberation Sans" >9</text>
<rect x="1" y="434" width="27" height="1" fill="#c6c6c6" />
<text x="15" y="430" font-size="14.2" fill="#217346" stroke="#217346" stroke-width="0.25" text-anchor="middle" font-family="Liberation Sans" >10</text>
<rect x="1" y="455" width="27" height="1" fill="#c6c6c6" />
<text x="15" y="451" font-size="14.2" fill="#217346" stroke="#217346" stroke-width="0.25" text-anchor="middle" font-family="Liberation Sans" >11</text>
<rect x="1" y="476" width="27" height="1" fill="#c6c6c6" />
<text x="15" y="472" font-size="14.2" fill="#217346" stroke="#217346" stroke-width="0.25" text-anchor="middle" font-family="Liberation Sans" >12</text>
<rect x="1" y="497" width="27" height="1" fill="#c6c6c6" />
<text x="15" y="493" font-size="14.2" fill="#217346" stroke="#217346" stroke-width="0.25" text-anchor="middle" font-family="Liberation Sans" >13</text>
<rect x="1" y="518" width="27" height="1" fill="#c6c6c6" />
<text x="15" y="514" font-size="14.2" fill="#217346" stroke="#217346" stroke-width="0.25" text-anchor="middle" font-family="Liberation Sans" >14</text>
<rect x="1" y="539" width="27" height="1" fill="#c6c6c6" />
<text x="15" y="535" font-size="14.2" fill="#217346" stroke="#217346" stroke-width="0.25" text-anchor="middle" font-family="Liberation Sans" >15</text>
<rect x="1" y="560" width="27" height="1" fill="#c6c6c6" />
<text x="15" y="556" font-size="14.2" fill="#217346" stroke="#217346" stroke-width="0.25" text-anchor="middle" font-family="Liberation Sans" >16</text>
<rect x="1" y="581" width="27" height="1" fill="#c6c6c6" />
<text x="15" y="577" font-size="14.2" fill="#217346" stroke="#217346" stroke-width="0.25" text-anchor="middle" font-family="Liberation Sans" >17</text>
<rect x="1" y="602" width="27" height="1" fill="#c6c6c6" />
<text x="15" y="598" font-size="14.2" fill="#217346" stroke="#217346" stroke-width="0.25" text-anchor="middle" font-family="Liberation Sans" >18</text>
<rect x="1" y="623" width="27" height="1" fill="#c6c6c6" />
<text x="15" y="619" font-size="14.2" fill="#217346" stroke="#217346" stroke-width="0.25" text-anchor="middle" font-family="Liberation Sans" >19</text>
<rect x="1" y="644" width="27" height="1" fill="#c6c6c6" />
<text x="15" y="640" font-size="14.2" fill="#217346" stroke="#217346" stroke-width="0.25" text-anchor="middle" font-family="Liberation Sans" >20</text>
<text x="15" y="661" font-size="14.2" fill="#217346" stroke="#217346" stroke-width="0.25" text-anchor="middle" font-family="Liberation Sans" >21</text>
<text x="33" y="241" font-size="14.2" fill="#000000" font-weight="700" textLength="105" lengthAdjust="spacingAndGlyphs" font-family="Liberation Sans" >Наименование</text>
<text x="449.5" y="241" font-size="14.2" fill="#000000" font-weight="700" text-anchor="middle" font-family="Liberation Sans" >Пол</text>
<text x="729.5" y="241" font-size="14.2" fill="#000000" font-weight="700" text-anchor="middle" font-family="Liberation Sans" >Вид спорта</text>
<text x="963.5" y="241" font-size="14.2" fill="#000000" font-weight="700" font-family="Liberation Sans" >Продажи, руб.</text>
<text x="32.3" y="262" font-size="15" fill="#000000" textLength="207.6" lengthAdjust="spacingAndGlyphs" font-family="Liberation Sans" >Кроссовки беговые,размер 35</text>
<text x="450" y="262" font-size="15" fill="#000000" textLength="61" lengthAdjust="spacingAndGlyphs" text-anchor="middle" font-family="Liberation Sans" >женский</text>
<text x="729.7" y="262" font-size="15" fill="#000000" textLength="24.2" lengthAdjust="spacingAndGlyphs" text-anchor="middle" font-family="Liberation Sans" >бег</text>
<text x="32.3" y="283" font-size="15" fill="#000000" textLength="211.3" lengthAdjust="spacingAndGlyphs" font-family="Liberation Sans" >Кроссовки беговые, размер 39</text>
<text x="450" y="283" font-size="15" fill="#000000" textLength="61" lengthAdjust="spacingAndGlyphs" text-anchor="middle" font-family="Liberation Sans" >мужской</text>
<text x="729.7" y="283" font-size="15" fill="#000000" textLength="24.2" lengthAdjust="spacingAndGlyphs" text-anchor="middle" font-family="Liberation Sans" >бег</text>
<text x="32.3" y="304" font-size="15" fill="#000000" textLength="260.9" lengthAdjust="spacingAndGlyphs" font-family="Liberation Sans" >Кроссовки для баскетбола, размер 39</text>
<text x="450" y="304" font-size="15" fill="#000000" textLength="61" lengthAdjust="spacingAndGlyphs" text-anchor="middle" font-family="Liberation Sans" >женский</text>
<text x="729.7" y="304" font-size="15" fill="#000000" textLength="70.5" lengthAdjust="spacingAndGlyphs" text-anchor="middle" font-family="Liberation Sans" >баскетбол</text>
<text x="32.3" y="325" font-size="15" fill="#000000" textLength="260.7" lengthAdjust="spacingAndGlyphs" font-family="Liberation Sans" >Кроссовки для баскетбола, размер 43</text>
<text x="450" y="325" font-size="15" fill="#000000" textLength="61" lengthAdjust="spacingAndGlyphs" text-anchor="middle" font-family="Liberation Sans" >мужской</text>
<text x="729.7" y="325" font-size="15" fill="#000000" textLength="70.5" lengthAdjust="spacingAndGlyphs" text-anchor="middle" font-family="Liberation Sans" >баскетбол</text>
<text x="32.3" y="346" font-size="15" fill="#000000" textLength="211.9" lengthAdjust="spacingAndGlyphs" font-family="Liberation Sans" >Кроссовки беговые, размер 40</text>
<text x="450" y="346" font-size="15" fill="#000000" textLength="61" lengthAdjust="spacingAndGlyphs" text-anchor="middle" font-family="Liberation Sans" >женский</text>
<text x="729.7" y="346" font-size="15" fill="#000000" textLength="24.2" lengthAdjust="spacingAndGlyphs" text-anchor="middle" font-family="Liberation Sans" >бег</text>
<text x="32.3" y="367" font-size="15" fill="#000000" textLength="211.9" lengthAdjust="spacingAndGlyphs" font-family="Liberation Sans" >Кроссовки беговые, размер 40</text>
<text x="450" y="367" font-size="15" fill="#000000" textLength="61" lengthAdjust="spacingAndGlyphs" text-anchor="middle" font-family="Liberation Sans" >мужской</text>
<text x="729.7" y="367" font-size="15" fill="#000000" textLength="24.2" lengthAdjust="spacingAndGlyphs" text-anchor="middle" font-family="Liberation Sans" >бег</text>
<text x="32.3" y="388" font-size="15" fill="#000000" textLength="211.6" lengthAdjust="spacingAndGlyphs" font-family="Liberation Sans" >Кроссовки беговые, размер 41</text>
<text x="450" y="388" font-size="15" fill="#000000" textLength="61" lengthAdjust="spacingAndGlyphs" text-anchor="middle" font-family="Liberation Sans" >мужской</text>
<text x="729.7" y="388" font-size="15" fill="#000000" textLength="24.2" lengthAdjust="spacingAndGlyphs" text-anchor="middle" font-family="Liberation Sans" >бег</text>
<text x="32.3" y="409" font-size="15" fill="#000000" textLength="229.4" lengthAdjust="spacingAndGlyphs" font-family="Liberation Sans" >Кроссовки теннисные, размер 41</text>
<text x="450" y="409" font-size="15" fill="#000000" textLength="61" lengthAdjust="spacingAndGlyphs" text-anchor="middle" font-family="Liberation Sans" >мужской</text>
<text x="729.7" y="409" font-size="15" fill="#000000" textLength="49.8" lengthAdjust="spacingAndGlyphs" text-anchor="middle" font-family="Liberation Sans" >теннис</text>
<text x="32.3" y="430" font-size="15" fill="#000000" textLength="229.4" lengthAdjust="spacingAndGlyphs" font-family="Liberation Sans" >Кроссовки теннисные, размер 42</text>
<text x="450" y="430" font-size="15" fill="#000000" textLength="61" lengthAdjust="spacingAndGlyphs" text-anchor="middle" font-family="Liberation Sans" >мужской</text>
<text x="729.7" y="430" font-size="15" fill="#000000" textLength="49.8" lengthAdjust="spacingAndGlyphs" text-anchor="middle" font-family="Liberation Sans" >теннис</text>
<text x="32.3" y="451" font-size="15" fill="#000000" textLength="211.6" lengthAdjust="spacingAndGlyphs" font-family="Liberation Sans" >Кроссовки беговые, размер 42</text>
<text x="450" y="451" font-size="15" fill="#000000" textLength="61" lengthAdjust="spacingAndGlyphs" text-anchor="middle" font-family="Liberation Sans" >мужской</text>
<text x="729.7" y="451" font-size="15" fill="#000000" textLength="24.2" lengthAdjust="spacingAndGlyphs" text-anchor="middle" font-family="Liberation Sans" >бег</text>
<text x="32.3" y="472" font-size="15" fill="#000000" textLength="211.9" lengthAdjust="spacingAndGlyphs" font-family="Liberation Sans" >Кроссовки беговые, размер 44</text>
<text x="450" y="472" font-size="15" fill="#000000" textLength="61" lengthAdjust="spacingAndGlyphs" text-anchor="middle" font-family="Liberation Sans" >мужской</text>
<text x="729.7" y="472" font-size="15" fill="#000000" textLength="24.2" lengthAdjust="spacingAndGlyphs" text-anchor="middle" font-family="Liberation Sans" >бег</text>
<text x="32.3" y="493" font-size="15" fill="#000000" textLength="211.6" lengthAdjust="spacingAndGlyphs" font-family="Liberation Sans" >Кроссовки беговые, размер 45</text>
<text x="450" y="493" font-size="15" fill="#000000" textLength="61" lengthAdjust="spacingAndGlyphs" text-anchor="middle" font-family="Liberation Sans" >мужской</text>
<text x="729.7" y="493" font-size="15" fill="#000000" textLength="24.2" lengthAdjust="spacingAndGlyphs" text-anchor="middle" font-family="Liberation Sans" >бег</text>
<text x="32.3" y="514" font-size="15" fill="#000000" textLength="229.7" lengthAdjust="spacingAndGlyphs" font-family="Liberation Sans" >Кроссовки теннисные, размер 38</text>
<text x="450" y="514" font-size="15" fill="#000000" textLength="61" lengthAdjust="spacingAndGlyphs" text-anchor="middle" font-family="Liberation Sans" >женский</text>
<text x="729.7" y="514" font-size="15" fill="#000000" textLength="49.8" lengthAdjust="spacingAndGlyphs" text-anchor="middle" font-family="Liberation Sans" >теннис</text>
<text x="32.3" y="535" font-size="15" fill="#000000" textLength="211.6" lengthAdjust="spacingAndGlyphs" font-family="Liberation Sans" >Кроссовки беговые, размер 35</text>
<text x="450" y="535" font-size="15" fill="#000000" textLength="61" lengthAdjust="spacingAndGlyphs" text-anchor="middle" font-family="Liberation Sans" >женский</text>
<text x="729.7" y="535" font-size="15" fill="#000000" textLength="24.2" lengthAdjust="spacingAndGlyphs" text-anchor="middle" font-family="Liberation Sans" >бег</text>
<rect x="1002" y="204" width="23" height="460" fill="#e6e6e6" />
<rect x="1006" y="221" width="15" height="429" fill="#dcdcdc" />
<rect x="1006.5" y="206.5" width="14" height="14" fill="#ffffff" stroke="#c6c6c6" stroke-width="1"/>
<rect x="1006.5" y="221.5" width="14" height="251" fill="#ffffff" stroke="#a8a8a8" stroke-width="1"/>
<rect x="1006.5" y="649.5" width="14" height="14" fill="#ffffff" stroke="#c6c6c6" stroke-width="1"/>
<rect x="1002" y="223" width="1" height="441" fill="#a9ad98" />
<path d="M1009 216 h9 l-4.5 -4.5 z" fill="#6b6b6b" />
<path d="M1009 655 h9 l-4.5 4.5 z" fill="#6b6b6b" />
<rect x="1" y="664" width="1023" height="28" fill="#e6e6e6" />
<rect x="1" y="664" width="1023" height="1" fill="#c6c6c6" />
<path d="M32.5 673.5 v8 l-4 -4 z" fill="#c4c4c4" />
<path d="M57 673.5 v8 l4 -4 z" fill="#c4c4c4" />
<rect x="101" y="664" width="107" height="25" fill="#ffffff" />
<rect x="101" y="664" width="1" height="25" fill="#c6c6c6" />
<rect x="207" y="664" width="1" height="25" fill="#c6c6c6" />
<rect x="101" y="687" width="107" height="2.5" fill="#217346" />
<text x="113.5" y="682" font-size="13" fill="#217346" font-weight="700" textLength="82.5" lengthAdjust="spacingAndGlyphs" font-family="Liberation Sans" >microexcel.ru</text>
<circle cx="249" cy="678" r="7.5" fill="none" stroke="#6b6b6b" stroke-width="1.2"/>
<path d="M245 678 h8 M249 674 v8" fill="none" stroke="#6b6b6b" stroke-width="1.6" />
<rect x="615" y="673" width="1.5" height="1.5" fill="#9a9a9a" />
<rect x="615" y="677" width="1.5" height="1.5" fill="#9a9a9a" />
<rect x="615" y="681" width="1.5" height="1.5" fill="#9a9a9a" />
<rect x="632" y="671" width="370" height="15" fill="#dcdcdc" />
<rect x="632.5" y="671.5" width="14" height="14" fill="#ffffff" stroke="#c6c6c6" stroke-width="1"/>
<rect x="646.5" y="671.5" width="170" height="14" fill="#ffffff" stroke="#c6c6c6" stroke-width="1"/>
<path d="M641 674.5 v7 l-3.5 -3.5 z" fill="#6b6b6b" />
<rect x="988.5" y="671.5" width="14" height="14" fill="#ffffff" stroke="#c6c6c6" stroke-width="1"/>
<path d="M994 674.5 v7 l3.5 -3.5 z" fill="#6b6b6b" />
<rect x="1" y="692" width="1023" height="22" fill="#f3f3f3" />
<rect x="1" y="692" width="1023" height="1" fill="#d6d6d6" />
<text x="9" y="705.8" font-size="11.5" fill="#1e1e1e" stroke="#1e1e1e" stroke-width="0.15" textLength="36" lengthAdjust="spacingAndGlyphs" font-family="Liberation Sans" >Готово</text>
<rect x="68.5" y="697.5" width="11.5" height="11" fill="none" stroke="#6b6b6b" stroke-width="1"/>
<rect x="68" y="697" width="12.5" height="2.5" fill="#6b6b6b" />
<rect x="71" y="702" width="2" height="1.2" fill="#6b6b6b" />
<rect x="74" y="702" width="2" height="1.2" fill="#6b6b6b" />
<rect x="77" y="702" width="2" height="1.2" fill="#6b6b6b" />
<rect x="71" y="705" width="2" height="1.2" fill="#6b6b6b" />
<rect x="74" y="705" width="2" height="1.2" fill="#6b6b6b" />
<rect x="77" y="705" width="2" height="1.2" fill="#6b6b6b" />
<circle cx="69.8" cy="698.8" r="2.8" fill="#6b6b6b"/>
<text x="392.5" y="705.8" font-size="11.5" fill="#1e1e1e" stroke="#1e1e1e" stroke-width="0.15" textLength="114" lengthAdjust="spacingAndGlyphs" font-family="Liberation Sans" >Среднее: 769279,2857</text>
<text x="522.5" y="705.8" font-size="11.5" fill="#1e1e1e" stroke="#1e1e1e" stroke-width="0.15" textLength="80.5" lengthAdjust="spacingAndGlyphs" font-family="Liberation Sans" >Количество: 90</text>
<text x="618.5" y="705.8" font-size="11.5" fill="#1e1e1e" stroke="#1e1e1e" stroke-width="0.15" textLength="87.5" lengthAdjust="spacingAndGlyphs" font-family="Liberation Sans" >Сумма: 32309730</text>
<rect x="724" y="693" width="38" height="21" fill="#d4d4d4" />
<rect x="736.5" y="696.5" width="12" height="12" fill="none" stroke="#6b6b6b" stroke-width="1.3"/>
<rect x="736" y="700" width="13" height="1.2" fill="#6b6b6b" />
<rect x="740" y="696" width="1.2" height="13" fill="#6b6b6b" />
<rect x="736" y="704" width="13" height="1.2" fill="#6b6b6b" />
<rect x="744" y="696" width="1.2" height="13" fill="#6b6b6b" />
<rect x="774.5" y="696.5" width="13" height="12" fill="none" stroke="#6b6b6b" stroke-width="1.2"/>
<rect x="777.5" y="698.5" width="7.5" height="8" fill="none" stroke="#6b6b6b" stroke-width="0.9"/>
<rect x="779" y="700" width="4.5" height="1" fill="#6b6b6b" />
<rect x="779" y="702.2" width="4.5" height="1" fill="#6b6b6b" />
<rect x="779" y="704.4" width="4.5" height="1" fill="#6b6b6b" />
<rect x="812.5" y="696.5" width="13" height="12" fill="none" stroke="#6b6b6b" stroke-width="1.2"/>
<path d="M812.5 704.5 H821.5 V696.5 M816.5 696.5 V703 M819.3 696.5 V703 M816.5 702.5 H819.3" fill="none" stroke="#6b6b6b" stroke-width="1.1" />
<rect x="843" y="702.5" width="7" height="1.6" fill="#6b6b6b" />
<rect x="853" y="702.5" width="100" height="1" fill="#a0a0a0" />
<rect x="901.5" y="697" width="4.5" height="11" fill="#6b6b6b" />
<path d="M957 703 h7 M960.5 699.5 v7" fill="none" stroke="#6b6b6b" stroke-width="1.6" />
<text x="976" y="705.8" font-size="11.5" fill="#1e1e1e" stroke="#1e1e1e" stroke-width="0.15" textLength="29" lengthAdjust="spacingAndGlyphs" font-family="Liberation Sans" >100 %</text>
<rect x="0" y="65" width="1" height="650" fill="#217346" />
<rect x="1024" y="65" width="1" height="650" fill="#217346" />
<rect x="0" y="714" width="1025" height="1" fill="#217346" /></svg></body></html>
